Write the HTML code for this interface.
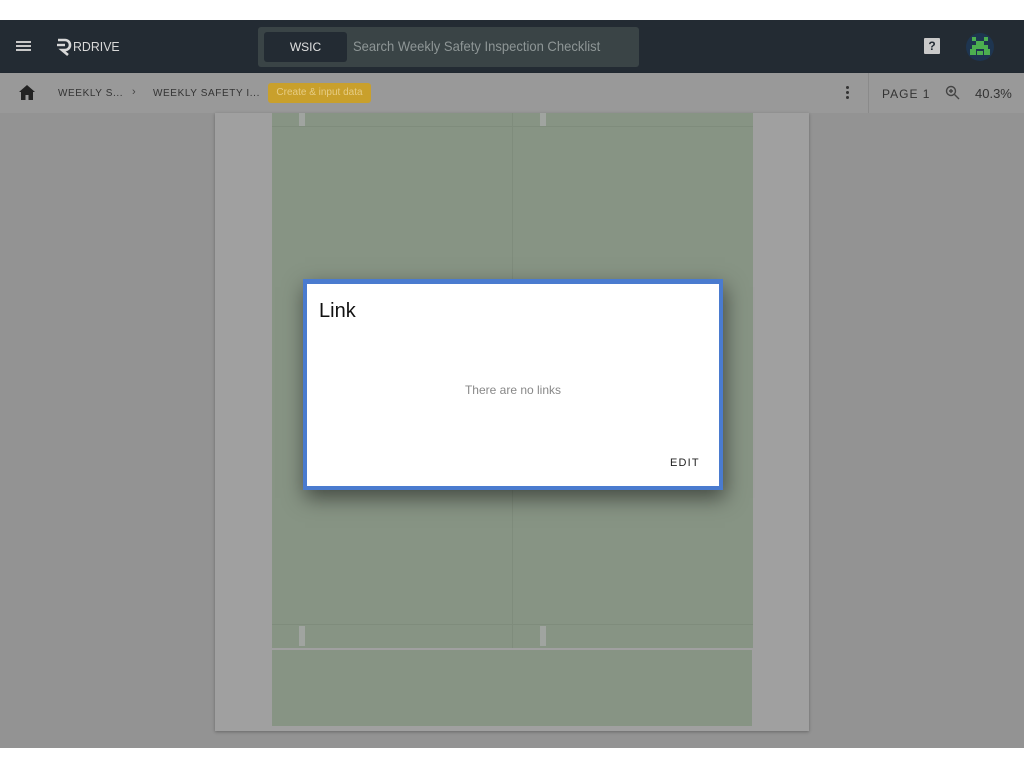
<!DOCTYPE html>
<html><head><meta charset="utf-8"><style>
*{margin:0;padding:0;box-sizing:border-box}
body{width:1024px;height:768px;background:#fff;font-family:"Liberation Sans",sans-serif;position:relative;overflow:hidden}
.abs{position:absolute}
</style></head><body>
<div class="abs" style="left:0;top:20px;width:1024px;height:53px;background:#232b33"></div>
<div class="abs" style="left:16px;top:41px;width:15px;height:2px;background:#c8c8c8;box-shadow:0 4px 0 #c8c8c8,0 8px 0 #c8c8c8"></div>
<svg class="abs" style="left:56px;top:37px" width="16" height="20" viewBox="0 0 16 20"><path d="M2 3h7a5 5 0 0 1 0 10H6l6 5" fill="none" stroke="#d8d8d8" stroke-width="2.6"/><path d="M1 8h8" stroke="#d8d8d8" stroke-width="2.4"/></svg>
<div class="abs" style="left:73px;top:39px;color:#d8d8d8;font-size:13px;transform:scaleX(.95);transform-origin:left">RDRIVE</div>
<div class="abs" style="left:258px;top:27px;width:381px;height:40px;background:#3a4446;border-radius:3px"></div>
<div class="abs" style="left:264px;top:32px;width:83px;height:30px;background:#232b33;border-radius:3px;color:#e0e0e0;font-size:12px;text-align:center;line-height:30px">WSIC</div>
<div class="abs" style="left:353px;top:38px;color:#8e9696;font-size:14px;transform:scaleX(.93);transform-origin:left">Search Weekly Safety Inspection Checklist</div>
<div class="abs" style="left:924px;top:38px;width:16px;height:16px;background:#c9c9c9;border-radius:1px;color:#232b33;font-size:12px;font-weight:bold;text-align:center;line-height:16px">?</div>
<svg class="abs" style="left:965px;top:32px" width="30" height="30" viewBox="0 0 30 30"><circle cx="15" cy="15" r="14" fill="#1e3550"/><g fill="#4caf50"><rect x="7" y="5" width="4" height="4"/><rect x="19" y="5" width="4" height="4"/><rect x="11" y="9" width="8" height="4"/><rect x="7" y="13" width="16" height="4"/><rect x="5" y="17" width="6" height="6"/><rect x="19" y="17" width="6" height="6"/><rect x="12" y="19" width="6" height="4"/></g></svg>
<div class="abs" style="left:0;top:73px;width:1024px;height:40px;background:#999;box-shadow:0 1px 3px rgba(0,0,0,.3)"></div>
<svg class="abs" style="left:19px;top:85px" width="16" height="15" viewBox="0 0 16 15"><path d="M8 0L0 7h2v8h4.5v-5h3v5H14V7h2z" fill="#222"/></svg>
<div class="abs" style="left:58px;top:88px;font-size:10px;letter-spacing:.6px;color:#333">WEEKLY S...</div>
<div class="abs" style="left:132px;top:86px;font-size:11px;color:#444">›</div>
<div class="abs" style="left:153px;top:88px;font-size:10px;letter-spacing:.6px;color:#333">WEEKLY SAFETY I...</div>
<div class="abs" style="left:268px;top:83px;width:103px;height:20px;background:#c9a02c;border-radius:3px;color:#e6cc84;font-size:10px;text-align:center;line-height:20px">Create &amp; input data</div>
<div class="abs" style="left:846px;top:86px;width:3px;height:3px;background:#333;border-radius:50%;box-shadow:0 5px 0 #333,0 10px 0 #333"></div>
<div class="abs" style="left:868px;top:73px;width:1px;height:40px;background:#8a8a8a"></div>
<div class="abs" style="left:882px;top:87px;font-size:12px;letter-spacing:1px;color:#333">PAGE 1</div>
<svg class="abs" style="left:945px;top:85px" width="16" height="16" viewBox="0 0 16 16"><circle cx="6" cy="6" r="4.5" fill="none" stroke="#444" stroke-width="1.4"/><path d="M9.5 9.5L14 14M4 6h4M6 4v4" stroke="#444" stroke-width="1.4"/></svg>
<div class="abs" style="left:975px;top:86px;font-size:13px;color:#333">40.3%</div>
<div class="abs" style="left:0;top:113px;width:1024px;height:635px;background:#939393"></div>
<div class="abs" style="left:215px;top:113px;width:594px;height:618px;background:#a0a0a0;box-shadow:0 1px 3px rgba(0,0,0,.3)"></div>
<div class="abs" style="left:272px;top:113px;width:481px;height:535px;background:#879484"></div>
<div class="abs" style="left:512px;top:113px;width:1px;height:535px;background:#7f8c7c"></div>
<div class="abs" style="left:272px;top:126px;width:481px;height:1px;background:#7f8c7c"></div>
<div class="abs" style="left:272px;top:624px;width:481px;height:1px;background:#7f8c7c"></div>
<div class="abs" style="left:299px;top:113px;width:6px;height:13px;background:#a0a4a0"></div>
<div class="abs" style="left:540px;top:113px;width:6px;height:13px;background:#a0a4a0"></div>
<div class="abs" style="left:299px;top:626px;width:6px;height:20px;background:#a0a4a0"></div>
<div class="abs" style="left:540px;top:626px;width:6px;height:20px;background:#a0a4a0"></div>
<div class="abs" style="left:272px;top:650px;width:480px;height:76px;background:#879484"></div>
<div class="abs" style="left:303px;top:279px;width:420px;height:211px;background:#4a7bcf;box-shadow:2px 8px 20px rgba(0,0,0,.5)"></div>
<div class="abs" style="left:307px;top:284px;width:412px;height:202px;background:#fff"></div>
<div class="abs" style="left:319px;top:300px;font-size:20px;color:#111">Link</div>
<div class="abs" style="left:307px;top:383px;width:412px;text-align:center;font-size:12px;color:#888">There are no links</div>
<div class="abs" style="left:670px;top:457px;font-size:11px;letter-spacing:1.2px;color:#222">EDIT</div>
</body></html>
